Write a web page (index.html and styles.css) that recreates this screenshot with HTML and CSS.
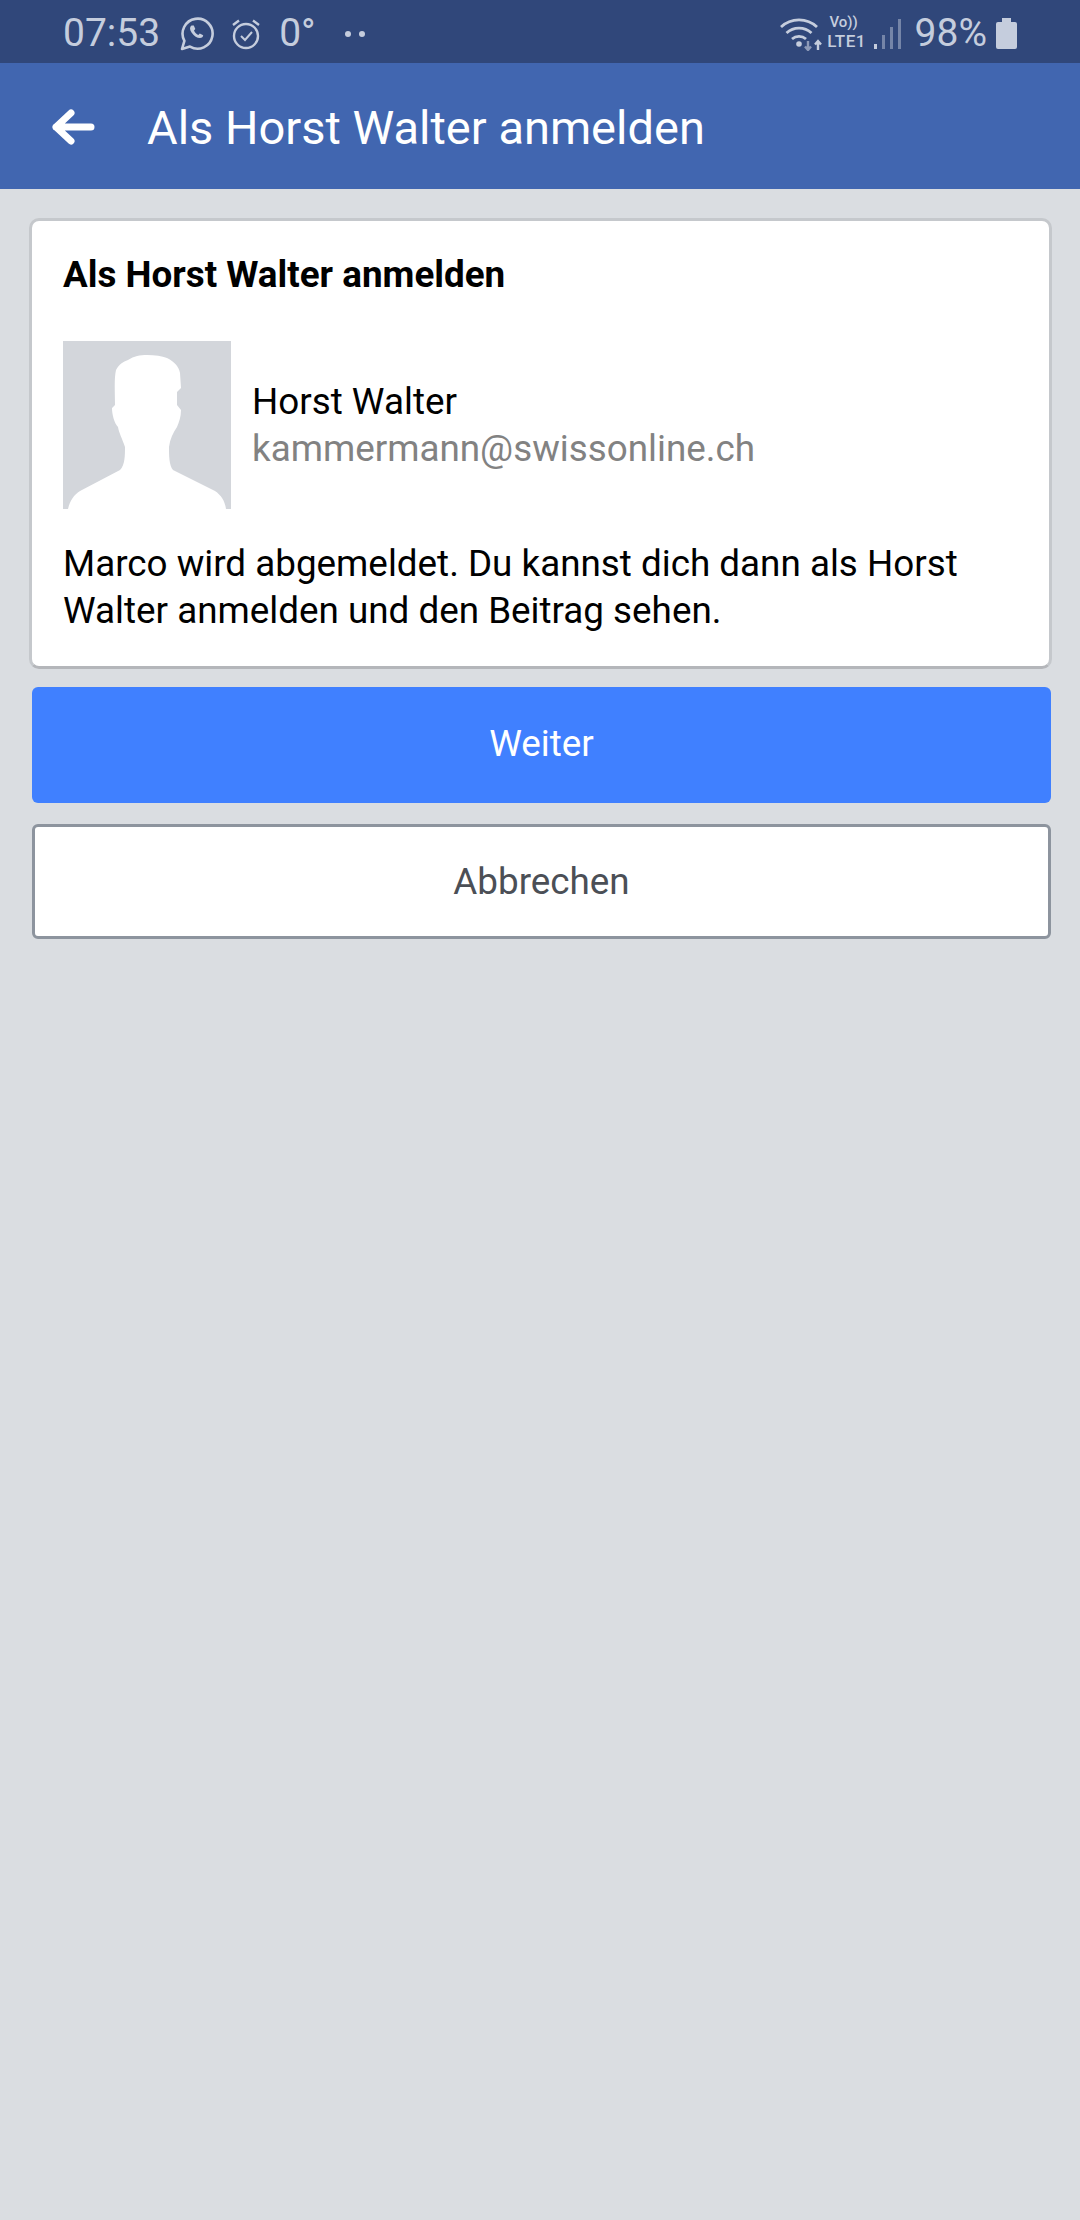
FILE: index.html
```html
<!DOCTYPE html>
<html lang="de">
  <head>
    <meta charset="UTF-8" />
    <title>Als Horst Walter anmelden</title>
    <meta name="viewport" content="width=device-width, initial-scale=1.0" />
    <link rel="stylesheet" href="styles.css">
  </head>
  <body>
    <div class="status-bar">
      <div class="status-left">
        <span class="status-time">07:53</span>
        <svg class="icon-whatsapp" viewBox="0 0 34 35" width="34" height="35">
          <path d="M2 33l2.400-8.200A15 15 0 1 1 10 30.600z" fill="none" stroke="#c5cddd" stroke-width="2.600" stroke-linejoin="round" />
          <path d="M11.500 9.500c-2 1.600-2 4 .2 7.200 2.400 3.400 5.400 5.300 8.200 5.300 2 0 3.300-1.200 3.300-2.800l-3.400-1.800-1.500 1.500c-1.700-.6-3.500-2.500-4.300-4.400l1.300-1.500-1.500-3.500z" fill="#c5cddd" />
        </svg>
        <svg class="icon-alarm" viewBox="0 0 30 32" width="30" height="32">
          <circle cx="15" cy="18" r="12" fill="none" stroke="#c5cddd" stroke-width="2.400" />
          <path d="M2 7l6-4.500M28 7l-6-4.500" stroke="#c5cddd" stroke-width="2.400" fill="none" />
          <path d="M10 18l4 4 7-8" stroke="#c5cddd" stroke-width="2" fill="none" />
        </svg>
        <span class="status-temp">0°</span>
        <span class="status-dots"><i></i><i></i></span>
      </div>
      <div class="status-right">
        <svg class="icon-wifi" viewBox="0 0 42 34" width="42" height="34">
          <path d="M1 10c10-9.500 26-9.500 36 0M6.500 16c7-6.500 18-6.500 25 0M12 22c4-3.500 10-3.500 14 0" fill="none" stroke="#c5cddd" stroke-width="2.800" />
          <circle cx="19" cy="27" r="2.800" fill="#c5cddd" />
          <path d="M28 24v9M25 29.500l3 3.500 3-3.500" fill="none" stroke="#8d9ab8" stroke-width="2.400" />
          <path d="M38 33v-9M35 27.500l3-3.500 3 3.500" fill="none" stroke="#c5cddd" stroke-width="2.400" />
        </svg>
        <div class="status-net">
          <span class="net-volte">Vo))</span>
          <span class="net-lte">LTE1</span>
        </div>
        <div class="status-signal">
          <i class="signal-on"></i><i></i><i></i><i></i>
        </div>
        <span class="status-battery-text">98%</span>
        <div class="battery">
          <div class="battery-cap"></div>
          <div class="battery-body"></div>
        </div>
      </div>
    </div>

    <div class="toolbar">
      <svg class="back-arrow" viewBox="0 0 44 36" width="44" height="36">
        <path d="M20 4L5 18l15 14M5 18h35" fill="none" stroke="#fff" stroke-width="7" stroke-linecap="round" stroke-linejoin="round" />
      </svg>
      <div class="toolbar-title">Als Horst Walter anmelden</div>
    </div>

    <div class="content">
      <div class="card">
        <div class="card-title">Als Horst Walter anmelden</div>
        <div class="profile">
          <svg class="avatar" viewBox="0 0 168 168" width="168" height="168">
            <rect width="168" height="168" fill="#d3d6db" />
            <path d="M5 168C7 159 11 154 17 150L57 129C62 124 62 114 62 106C59 97 56 92 55 86C51 82 49 73 49 67L52 64C52 50 51 38 53 29C56 23 60 21 65 19C71 15 77 14 84 14C92 14 99 15 104 17C112 21 116 26 117 32L118 47L114 51L114 64L118 69C118 76 116 81 114 86C110 92 107 98 106 106C106 114 106 124 110 129L152 150C158 154 162 160 163 168Z" fill="#fff" />
          </svg>
          <div class="profile-text">
            <div class="profile-name">Horst Walter</div>
            <div class="profile-mail">kammermann@swissonline.ch</div>
          </div>
        </div>
        <div class="card-message">Marco wird abgemeldet. Du kannst dich dann als Horst Walter anmelden und den Beitrag sehen.</div>
      </div>
      <button class="btn btn-next">Weiter</button>
      <button class="btn btn-cancel">Abbrechen</button>
    </div>
  </body>
</html>
```

FILE: styles.css
```css
html,
body {
  margin: 0;
}
body {
  background: #dadde1;
  font-family: Roboto, "Noto Sans", sans-serif;
  min-height: 2220px;
}
.status-bar {
  height: 63px;
  background: #30477a;
  color: #c5cddd;
  display: flex;
  align-items: center;
  justify-content: space-between;
  padding: 4px 63px 0 63px;
  box-sizing: border-box;
}
.status-left,
.status-right {
  display: flex;
  align-items: center;
}
.status-time {
  font-size: 39px;
  line-height: 1;
  margin-right: 20px;
}
.icon-whatsapp {
  margin-right: 17px;
}
.icon-alarm {
  margin-right: 18px;
}
.status-temp {
  font-size: 39px;
  line-height: 1;
  margin-right: 29px;
}
.status-dots {
  display: flex;
  gap: 8px;
}
.status-dots i {
  width: 6px;
  height: 6px;
  border-radius: 50%;
  background: #c5cddd;
}
.icon-wifi {
  margin-right: 4px;
}
.status-net {
  display: flex;
  flex-direction: column;
  align-items: center;
  width: 42px;
  font-weight: 500;
  padding-bottom: 4px;
  margin-right: 6px;
}
.net-volte {
  margin-left: -6px;
  font-size: 15px;
  line-height: 18px;
}
.net-lte {
  font-size: 17px;
  line-height: 20px;
  letter-spacing: 0.5px;
}
.status-signal {
  display: flex;
  align-items: flex-end;
  gap: 5px;
  height: 30px;
  margin-right: 14px;
}
.status-signal i {
  width: 3px;
  background: #7585a8;
}
.status-signal i:nth-child(1) {
  height: 5px;
}
.status-signal i:nth-child(2) {
  height: 14px;
}
.status-signal i:nth-child(3) {
  height: 22px;
}
.status-signal i:nth-child(4) {
  height: 30px;
}
.status-signal .signal-on {
  background: #c5cddd;
}
.status-battery-text {
  font-size: 39px;
  line-height: 1;
  margin-right: 9px;
}
.battery {
  display: flex;
  flex-direction: column;
  align-items: center;
  width: 21px;
}
.battery-cap {
  width: 9px;
  height: 4px;
  background: #c5cddd;
}
.battery-body {
  width: 21px;
  height: 27px;
  background: #c5cddd;
  border-radius: 2px;
}
.toolbar {
  height: 126px;
  background: #4166b0;
  display: flex;
  align-items: center;
  padding-left: 51px;
  box-sizing: border-box;
}
.back-arrow {
  margin: 2px 52px 0 0;
}
.toolbar-title {
  color: #fff;
  font-size: 47px;
  line-height: 56px;
  padding-top: 3px;
}
.content {
  display: flex;
  flex-direction: column;
  padding: 29px 28px 0 29px;
}
.card {
  background: #fff;
  border: 3px solid #c5c8cc;
  border-bottom-color: #b4b6ba;
  border-radius: 10px;
  padding: 32px 29px 0 31px;
  box-sizing: border-box;
  height: 451px;
}
.card-title {
  font-size: 36.8px;
  font-weight: 700;
  line-height: 44px;
  color: #000;
  margin-bottom: 44px;
}
.profile {
  display: flex;
  align-items: center;
  gap: 21px;
  margin-bottom: 31px;
}
.profile-name {
  font-size: 36.8px;
  line-height: 47px;
  color: #000;
}
.profile-mail {
  font-size: 36.8px;
  line-height: 47px;
  color: #828282;
}
.card-message {
  font-size: 36.8px;
  line-height: 47px;
  color: #000;
}
.btn {
  display: block;
  width: 1019px;
  margin-left: 3px;
  font-family: inherit;
  font-size: 36.8px;
  box-sizing: border-box;
}
.btn-next {
  height: 116px;
  margin-top: 18px;
  padding-bottom: 4px;
  background: #4080ff;
  color: #fff;
  border: none;
  border-radius: 6px;
}
.btn-cancel {
  height: 115px;
  margin-top: 21px;
  background: #fff;
  color: #4b4f56;
  border: 3px solid #8d949e;
  border-radius: 6px;
}
```
